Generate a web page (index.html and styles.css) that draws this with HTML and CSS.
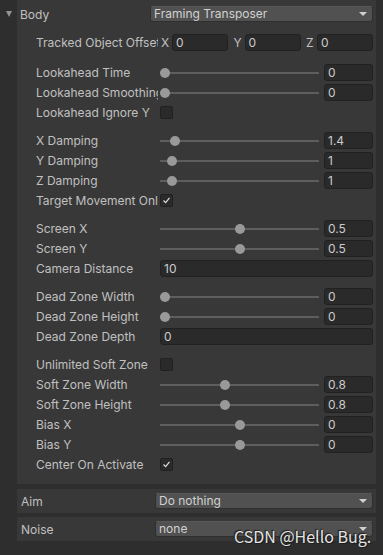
FILE: index.html
```html
<!DOCTYPE html>
<html lang="en">
<head>
  <meta charset="UTF-8" />
  <meta name="viewport" content="width=device-width, initial-scale=1.0"/>
  <title>Framing Transposer</title>
  <link rel="stylesheet" href="styles.css">
</head>
<body>
  <div class="inspector">

    <!-- Body -->
    <div class="section body-section">
      <div class="header-row">
        <span class="foldout"></span>
        <span class="header-label">Body</span>
        <div class="dropdown">Framing Transposer</div>
      </div>

      <div class="group group-first">
        <div class="row">
          <div class="label">Tracked Object Offset</div>
          <div class="value vec3">
            <div class="axis"><span>X</span><div class="field">0</div></div>
            <div class="axis"><span>Y</span><div class="field">0</div></div>
            <div class="axis"><span>Z</span><div class="field">0</div></div>
          </div>
        </div>
      </div>

      <div class="group">
        <div class="row">
          <div class="label">Lookahead Time</div>
          <div class="value slider">
            <div class="track"><div class="knob" style="--v: 0"></div></div>
            <div class="field small">0</div>
          </div>
        </div>
        <div class="row">
          <div class="label">Lookahead Smoothing</div>
          <div class="value slider">
            <div class="track"><div class="knob" style="--v: 0"></div></div>
            <div class="field small">0</div>
          </div>
        </div>
        <div class="row">
          <div class="label">Lookahead Ignore Y</div>
          <div class="value"><div class="checkbox"></div></div>
        </div>
      </div>

      <div class="group">
        <div class="row">
          <div class="label">X Damping</div>
          <div class="value slider">
            <div class="track"><div class="knob" style="--v: 0.07"></div></div>
            <div class="field small">1.4</div>
          </div>
        </div>
        <div class="row">
          <div class="label">Y Damping</div>
          <div class="value slider">
            <div class="track"><div class="knob" style="--v: 0.05"></div></div>
            <div class="field small">1</div>
          </div>
        </div>
        <div class="row">
          <div class="label">Z Damping</div>
          <div class="value slider">
            <div class="track"><div class="knob" style="--v: 0.05"></div></div>
            <div class="field small">1</div>
          </div>
        </div>
        <div class="row">
          <div class="label">Target Movement Only</div>
          <div class="value">
            <div class="checkbox checked">
              <svg width="13" height="13" viewBox="0 0 13 13"><polyline points="3,6.5 5.5,9 10,3.5" fill="none" stroke="#e0e0e0" stroke-width="1.4"/></svg>
            </div>
          </div>
        </div>
      </div>

      <div class="group">
        <div class="row">
          <div class="label">Screen X</div>
          <div class="value slider">
            <div class="track"><div class="knob" style="--v: 0.5"></div></div>
            <div class="field small">0.5</div>
          </div>
        </div>
        <div class="row">
          <div class="label">Screen Y</div>
          <div class="value slider">
            <div class="track"><div class="knob" style="--v: 0.5"></div></div>
            <div class="field small">0.5</div>
          </div>
        </div>
        <div class="row">
          <div class="label">Camera Distance</div>
          <div class="value"><div class="field wide">10</div></div>
        </div>
      </div>

      <div class="group">
        <div class="row">
          <div class="label">Dead Zone Width</div>
          <div class="value slider">
            <div class="track"><div class="knob" style="--v: 0"></div></div>
            <div class="field small">0</div>
          </div>
        </div>
        <div class="row">
          <div class="label">Dead Zone Height</div>
          <div class="value slider">
            <div class="track"><div class="knob" style="--v: 0"></div></div>
            <div class="field small">0</div>
          </div>
        </div>
        <div class="row">
          <div class="label">Dead Zone Depth</div>
          <div class="value"><div class="field wide">0</div></div>
        </div>
      </div>

      <div class="group">
        <div class="row">
          <div class="label">Unlimited Soft Zone</div>
          <div class="value"><div class="checkbox"></div></div>
        </div>
        <div class="row">
          <div class="label">Soft Zone Width</div>
          <div class="value slider">
            <div class="track"><div class="knob" style="--v: 0.4"></div></div>
            <div class="field small">0.8</div>
          </div>
        </div>
        <div class="row">
          <div class="label">Soft Zone Height</div>
          <div class="value slider">
            <div class="track"><div class="knob" style="--v: 0.4"></div></div>
            <div class="field small">0.8</div>
          </div>
        </div>
        <div class="row">
          <div class="label">Bias X</div>
          <div class="value slider">
            <div class="track"><div class="knob" style="--v: 0.5"></div></div>
            <div class="field small">0</div>
          </div>
        </div>
        <div class="row">
          <div class="label">Bias Y</div>
          <div class="value slider">
            <div class="track"><div class="knob" style="--v: 0.5"></div></div>
            <div class="field small">0</div>
          </div>
        </div>
        <div class="row">
          <div class="label">Center On Activate</div>
          <div class="value">
            <div class="checkbox checked">
              <svg width="13" height="13" viewBox="0 0 13 13"><polyline points="3,6.5 5.5,9 10,3.5" fill="none" stroke="#e0e0e0" stroke-width="1.4"/></svg>
            </div>
          </div>
        </div>
      </div>
    </div>

    <!-- Aim -->
    <div class="section stage-section">
      <span class="header-label">Aim</span>
      <div class="dropdown">Do nothing</div>
    </div>

    <!-- Noise -->
    <div class="section stage-section">
      <span class="header-label">Noise</span>
      <div class="dropdown">none</div>
    </div>
  </div>

  <div class="watermark">CSDN @Hello Bug.</div>
</body>
</html>
```

FILE: styles.css
```css
:root {
  --bg-dark: #2e2e2e;
  --bg-panel: #383838;
  --text: #c0c0c0;
  --field-bg: #2a2a2a;
  --field-border: #212121;
  --popup-bg: #515151;
}

* {
  box-sizing: border-box;
  margin: 0;
  padding: 0;
}

body {
  width: 383px;
  height: 555px;
  background: var(--bg-dark);
  font-family: Inter, 'Noto Sans', sans-serif;
  font-size: 12px;
  color: var(--text);
  overflow: hidden;
  position: relative;
}

.inspector {
  padding-left: 17px;
  width: 376px;
}

.section {
  background: var(--bg-panel);
  padding-right: 3px;
}

.body-section {
  display: flex;
  flex-direction: column;
  padding-top: 5px;
  padding-bottom: 11px;
}

.header-row {
  display: flex;
  align-items: center;
  height: 18px;
  margin-bottom: 11px;
}

/* foldout arrow sits in the gutter left of the panel */
.foldout {
  width: 0;
  height: 0;
  margin-left: -11px;
  border-left: 3.5px solid transparent;
  border-right: 3.5px solid transparent;
  border-top: 6px solid #939393;
}

.header-label {
  margin-left: 8px;
  width: 130px;
}

.dropdown {
  flex: 1;
  height: 16px;
  line-height: 14px;
  padding-left: 3px;
  background: var(--popup-bg);
  border: 1px solid #2f2f2f;
  border-top-color: #585858;
  border-radius: 3px;
  color: #d0d0d0;
  position: relative;
}

.dropdown::after {
  content: '';
  position: absolute;
  right: 5px;
  top: 5px;
  border-left: 4px solid transparent;
  border-right: 4px solid transparent;
  border-top: 4px solid #d0d0d0;
}

.group {
  display: flex;
  flex-direction: column;
  gap: 3px;
  margin-bottom: 11px;
}

.group:last-child {
  margin-bottom: 0;
}

.group-first {
  margin-bottom: 13px;
}

.row {
  display: flex;
  align-items: center;
  height: 17px;
  padding-left: 19px;
}

.label {
  width: 122px;
  margin-right: 2px;
  white-space: nowrap;
  overflow: hidden;
}

.value {
  flex: 1;
  display: flex;
  align-items: center;
  height: 100%;
}

.field {
  height: 17px;
  line-height: 15px;
  padding-left: 3px;
  background: var(--field-bg);
  border: 1px solid var(--field-border);
  border-radius: 3px;
  color: #cccccc;
}

.field.small {
  width: 49px;
}

.field.wide {
  flex: 1;
}

.vec3 {
  gap: 4.5px;
}

.axis {
  flex: 1;
  display: flex;
  align-items: center;
}

.axis span {
  width: 12px;
  padding-left: 1px;
}

.axis .field {
  flex: 1;
}

.slider {
  gap: 5px;
}

.track {
  flex: 1;
  height: 100%;
  position: relative;
}

.track::before {
  content: '';
  position: absolute;
  left: 0;
  right: 0;
  top: 8px;
  height: 2px;
  background: #5e5e5e;
}

.knob {
  position: absolute;
  top: 4px;
  width: 10px;
  height: 10px;
  border-radius: 50%;
  background: #999999;
  left: calc(var(--v) * (100% - 10px));
}

.checkbox {
  width: 13px;
  height: 13px;
  background: var(--field-bg);
  border: 1px solid var(--field-border);
  border-radius: 2px;
  display: flex;
  align-items: center;
  justify-content: center;
}

.checkbox svg {
  display: block;
}

.stage-section {
  display: flex;
  align-items: center;
  height: 24px;
  margin-top: 5px;
}

.stage-section + .stage-section {
  margin-top: 4px;
}

.stage-section .header-label {
  margin-left: 4px;
  width: 134px;
}

.watermark {
  position: absolute;
  left: 234px;
  top: 524px;
  font-family: 'Noto Sans CJK SC', 'Noto Sans', sans-serif;
  font-size: 16px;
  color: #e4e4e4;
  text-shadow: 1px 1px 1px #1c1c1c, -1px -1px 1px #1c1c1c;
  white-space: nowrap;
}
```
